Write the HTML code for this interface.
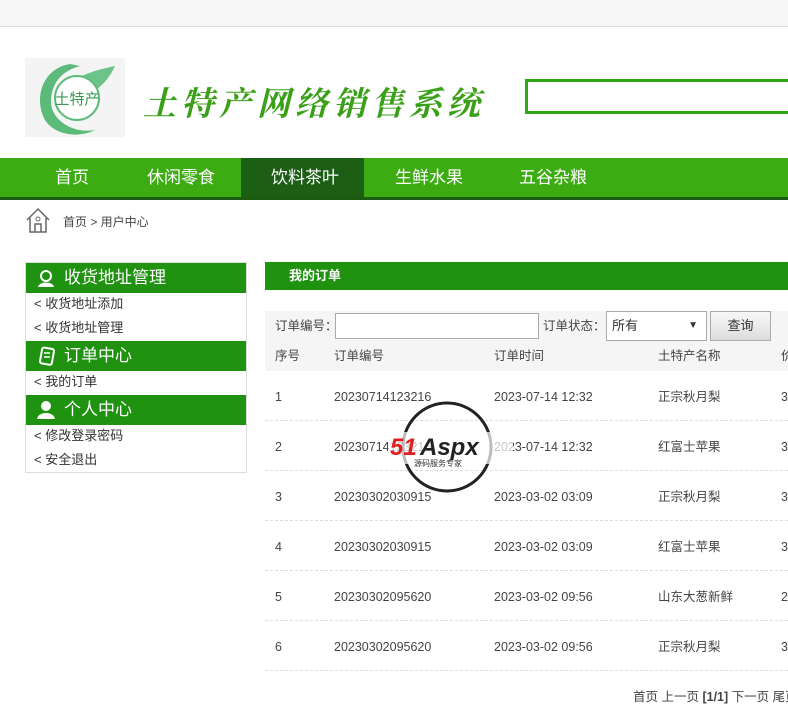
<!DOCTYPE html>
<html><head><meta charset="utf-8"><style>
*{margin:0;padding:0;box-sizing:border-box}
body{width:788px;height:725px;overflow:hidden;background:#fff;font-family:"Liberation Sans","Noto Sans CJK SC",sans-serif;color:#333;position:relative}
.a{position:absolute}
.top{left:0;top:0;width:788px;height:27px;background:#f7f7f7;border-bottom:1px solid #ddd}
.nav{left:0;top:158px;width:788px;height:42px;background:#3cac12;border-bottom:3px solid #1c5a10}
.nav span{position:absolute;top:0;height:39px;line-height:39px;color:#fff;font-size:17px}
.sb{left:25px;top:262px;width:222px;height:211px;border:1px solid #ddd}
.sh{position:absolute;left:0;width:220px;height:30px;background:#1f9210;color:#fff;font-size:17px;line-height:30px;padding-left:38px}
.si{position:absolute;left:8px;font-size:13px;color:#333;line-height:16px}
.td{position:absolute;font-size:12.5px;color:#444;line-height:16px}
.row{position:absolute;left:265px;width:523px;border-bottom:1px dashed #ddd;height:50px}
</style></head><body>
<div class="a top"></div>
<div class="a" style="left:25px;top:58px;width:100px;height:79px;background:#f4f4f4"></div>
<svg class="a" style="left:25px;top:58px" width="100" height="80"><path d="M45 6 C18 10 8 40 20 62 C30 78 55 80 70 72 C48 76 25 62 26 42 C27 22 40 12 55 8Z" fill="#5cbb7a"/><path d="M90 8 C70 12 40 20 35 40 C60 44 80 30 90 8Z" fill="#6cc48a"/><circle cx="52" cy="40" r="22" fill="#fff" stroke="#5cbb7a" stroke-width="2"/><text x="52" y="46" font-size="15" text-anchor="middle" fill="#3a9a55" font-family="Noto Sans CJK SC">土特产</text></svg>
<div class="a" style="left:143px;top:78px;font-size:33px;color:#3aa018;font-family:'Noto Serif CJK SC',serif;font-weight:bold;letter-spacing:5px;font-style:italic">土特产网络销售系统</div>
<div class="a" style="left:525px;top:79px;width:270px;height:35px;border:3px solid #2ea61a"></div>
<div class="a nav">
<div class="a" style="left:241px;top:0;width:123px;height:39px;background:#1b5e14"></div>
<span style="left:55px">首页</span><span style="left:147px">休闲零食</span><span style="left:271px">饮料茶叶</span><span style="left:395px">生鲜水果</span><span style="left:519px">五谷杂粮</span></div>
<svg class="a" style="left:25px;top:207px" width="26" height="27"><path d="M2 13 L13 2 L24 13 M5 11 V25 H21 V11 M10 25 V17 H16 V25" fill="none" stroke="#666" stroke-width="1.5"/><circle cx="13" cy="12" r="2" fill="none" stroke="#666"/></svg>
<div class="a" style="left:63px;top:214px;font-size:12px;color:#444;line-height:16px">首页 &gt; 用户中心</div>
<div class="a sb">
<div class="sh" style="top:0">收货地址管理</div>
<div class="si" style="top:33px">&lt; 收货地址添加</div>
<div class="si" style="top:57px">&lt; 收货地址管理</div>
<div class="sh" style="top:78px">订单中心</div>
<div class="si" style="top:111px">&lt; 我的订单</div>
<div class="sh" style="top:132px">个人中心</div>
<div class="si" style="top:165px">&lt; 修改登录密码</div>
<div class="si" style="top:189px">&lt; 安全退出</div>
<svg class="a" style="left:10px;top:5px" width="20" height="20"><circle cx="10" cy="8" r="5" fill="none" stroke="#fff" stroke-width="2"/><path d="M2 19 C3 13 17 13 18 19Z" fill="#fff"/></svg>
<svg class="a" style="left:10px;top:83px" width="20" height="20"><rect x="5" y="2" width="12" height="16" rx="2" fill="none" stroke="#fff" stroke-width="2" transform="rotate(10 10 10)"/><path d="M8 7h6M8 11h6" stroke="#fff" stroke-width="1.5"/></svg>
<svg class="a" style="left:10px;top:137px" width="20" height="20"><circle cx="10" cy="6" r="5" fill="#fff"/><path d="M1 19 C2 11 18 11 19 19Z" fill="#fff"/></svg>
</div>
<div class="a" style="left:265px;top:262px;width:523px;height:28px;background:#1f9210;color:#fff;font-size:13px;font-weight:bold;line-height:28px;padding-left:24px">我的订单</div>
<div class="a" style="left:265px;top:311px;width:523px;height:60px;background:#f5f5f5"></div>
<div class="td" style="left:275px;top:318px">订单编号：</div>
<div class="a" style="left:335px;top:313px;width:204px;height:26px;border:1px solid #aaa;background:#fff"></div>
<div class="td" style="left:543px;top:318px">订单状态：</div>
<div class="a" style="left:606px;top:311px;width:101px;height:30px;border:1px solid #aaa;background:#fff;font-size:13px;line-height:28px;padding-left:5px">所有<span style="position:absolute;right:8px;font-size:10px">▼</span></div>
<div class="a" style="left:710px;top:311px;width:61px;height:30px;border:1px solid #aaa;background:linear-gradient(#f8f8f8,#ddd);font-size:13px;line-height:28px;text-align:center">查询</div>
<div class="td" style="left:275px;top:348px">序号</div><div class="td" style="left:334px;top:348px">订单编号</div><div class="td" style="left:494px;top:348px">订单时间</div><div class="td" style="left:658px;top:348px">土特产名称</div><div class="td" style="left:781px;top:348px">价</div>
<div class="row" style="top:371px"></div><div class="row" style="top:421px"></div><div class="row" style="top:471px"></div><div class="row" style="top:521px"></div><div class="row" style="top:571px"></div><div class="row" style="top:621px"></div>
<div class="td" style="left:275px;top:389px">1</div><div class="td" style="left:334px;top:389px">20230714123216</div><div class="td" style="left:494px;top:389px">2023-07-14 12:32</div><div class="td" style="left:658px;top:389px">正宗秋月梨</div><div class="td" style="left:781px;top:389px">3</div>
<div class="td" style="left:275px;top:439px">2</div><div class="td" style="left:334px;top:439px">20230714123216</div><div class="td" style="left:494px;top:439px">2023-07-14 12:32</div><div class="td" style="left:658px;top:439px">红富士苹果</div><div class="td" style="left:781px;top:439px">3</div>
<div class="td" style="left:275px;top:489px">3</div><div class="td" style="left:334px;top:489px">20230302030915</div><div class="td" style="left:494px;top:489px">2023-03-02 03:09</div><div class="td" style="left:658px;top:489px">正宗秋月梨</div><div class="td" style="left:781px;top:489px">3</div>
<div class="td" style="left:275px;top:539px">4</div><div class="td" style="left:334px;top:539px">20230302030915</div><div class="td" style="left:494px;top:539px">2023-03-02 03:09</div><div class="td" style="left:658px;top:539px">红富士苹果</div><div class="td" style="left:781px;top:539px">3</div>
<div class="td" style="left:275px;top:589px">5</div><div class="td" style="left:334px;top:589px">20230302095620</div><div class="td" style="left:494px;top:589px">2023-03-02 09:56</div><div class="td" style="left:658px;top:589px">山东大葱新鲜</div><div class="td" style="left:781px;top:589px">2</div>
<div class="td" style="left:275px;top:639px">6</div><div class="td" style="left:334px;top:639px">20230302095620</div><div class="td" style="left:494px;top:639px">2023-03-02 09:56</div><div class="td" style="left:658px;top:639px">正宗秋月梨</div><div class="td" style="left:781px;top:639px">3</div>
<div class="td" style="left:633px;top:689px;white-space:nowrap">首页 上一页 <b>[1/1]</b> 下一页 尾页</div>
<svg class="a" style="left:388px;top:400px" width="125" height="95"><circle cx="59" cy="47" r="44" fill="none" stroke="#222" stroke-width="3"/><rect x="0" y="32" width="125" height="32" fill="rgba(255,255,255,.7)"/><text x="2" y="55" font-size="24" font-weight="bold" font-style="italic" fill="#e02020" font-family="Liberation Sans">51</text><text x="32" y="55" font-size="24" font-weight="bold" font-style="italic" fill="#222" font-family="Liberation Sans">Aspx</text><text x="26" y="66" font-size="8" fill="#333" font-family="Noto Sans CJK SC">源码服务专家</text></svg>
</body></html>
